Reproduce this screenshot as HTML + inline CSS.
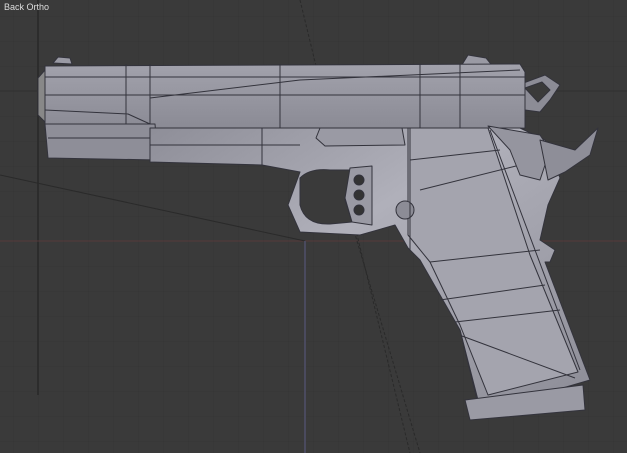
<!DOCTYPE html>
<html><head><style>
html,body{margin:0;padding:0;background:#3a3a3a;overflow:hidden}
svg{display:block}
.t{font:9px "Liberation Sans",sans-serif;fill:#ddd}
</style></head><body>
<svg width="627" height="453" viewBox="0 0 627 453">
<defs>
<pattern id="g" width="25" height="25" patternUnits="userSpaceOnUse" x="13" y="16">
<path d="M0 0H25M0 0V25" stroke="#353535" stroke-width="1" fill="none"/>
</pattern>
<linearGradient id="s" x1="0" y1="0" x2="0" y2="1">
<stop offset="0" stop-color="#a2a2ac"/><stop offset="1" stop-color="#8a8a94"/></linearGradient>
<linearGradient id="gr" x1="0" y1="0" x2="1" y2="1">
<stop offset="0" stop-color="#8e8e98"/><stop offset="0.4" stop-color="#b0b0ba"/><stop offset="1" stop-color="#8c8c96"/></linearGradient>
</defs>
<rect width="627" height="453" fill="#3a3a3a"/>
<rect width="627" height="453" fill="url(#g)"/>
<line x1="38" y1="0" x2="38" y2="395" stroke="#2c2c2c" stroke-width="2"/>
<line x1="0" y1="91" x2="627" y2="91" stroke="#303030"/>
<line x1="0" y1="241" x2="627" y2="241" stroke="#55393a"/>
<line x1="0" y1="175" x2="305" y2="241" stroke="#2a2a2a"/>
<line x1="300" y1="0" x2="410" y2="453" stroke="#2a2a2a" stroke-dasharray="3,2"/>
<line x1="330" y1="150" x2="420" y2="453" stroke="#2a2a2a" stroke-dasharray="3,2"/>
<line x1="305" y1="241" x2="305" y2="453" stroke="#4a4a5e" stroke-width="2"/>
<text class="t" x="4" y="10">Back Ortho</text>
<g stroke="#33333c" stroke-width="1" stroke-linejoin="round">
<path d="M460 68 L468 55 L486 58 L494 68 Z" fill="#9a9aa4"/>
<path d="M53 63 L58 57 L70 58 L72 64 Z" fill="#9a9aa4"/>
<path d="M518 85 L545 75 L560 85 L550 100 L540 112 L525 110 Z" fill="#8c8c96"/>
<path d="M525 88 L542 82 L550 90 L538 102 Z" fill="#3a3a3a"/>
<path d="M45 66 L520 64 L525 72 L525 128 L45 130 Z" fill="url(#s)"/>
<path d="M38 78 L45 70 L45 122 L38 115 Z" fill="#888"/>
<path d="M45 77 H525 M45 95 H525 M45 110 L128 114 L150 124 M150 98 L300 80 L520 70 M126 64 V130 M150 64 V130 M280 64 V128 M420 64 V128 M460 64 V128" fill="none"/>
<path d="M45 124 L155 124 L158 160 L48 158 Z" fill="#8e8e98"/>
<path d="M48 138 H155" fill="none"/>
<path d="M150 128 L520 128 L545 140 L560 178 L548 205 L540 240 L555 250 L550 262 L545 262 L590 380 L480 412 L460 330 L420 260 L408 248 L395 225 L360 235 L300 232 L288 205 L300 172 L262 165 L150 162 Z" fill="url(#gr)"/>
<path d="M408 128 L488 128 L530 255 L578 372 L488 395 L460 325 L430 262 L408 235 Z" fill="#a4a4ae"/>
<path d="M430 262 L540 250 M440 300 L545 285 M455 322 L560 310 M462 336 L575 378 M460 330 L478 400 M490 130 L580 370 M420 190 L520 165 M410 160 L500 150" fill="none"/>
<path d="M300 178 Q310 168 330 170 L352 170 L345 200 L352 222 L330 224 Q305 225 300 205 Z" fill="#3a3a3a"/>
<path d="M350 168 L372 166 L372 225 L352 222 L345 198 Z" fill="#9a9aa4"/>
<circle cx="359" cy="180" r="5" fill="#333"/><circle cx="359" cy="195" r="5" fill="#333"/><circle cx="359" cy="210" r="5" fill="#333"/>
<path d="M320 128 L402 128 L405 145 L325 146 L316 138 Z" fill="#9a9aa4"/>
<circle cx="405" cy="210" r="9" fill="#8c8c96"/>
<path d="M488 126 L540 135 L550 150 L540 180 L520 175 L510 150 Z" fill="#95959f"/>
<path d="M540 140 L575 150 L598 128 L590 155 L565 172 L548 180 Z" fill="#8e8e98"/>
<path d="M465 400 L583 385 L585 410 L470 420 Z" fill="#9a9aa4"/>
<path d="M150 145 H300 M262 128 V165 M410 128 V250" fill="none"/>
</g>
</svg>
</body></html>
